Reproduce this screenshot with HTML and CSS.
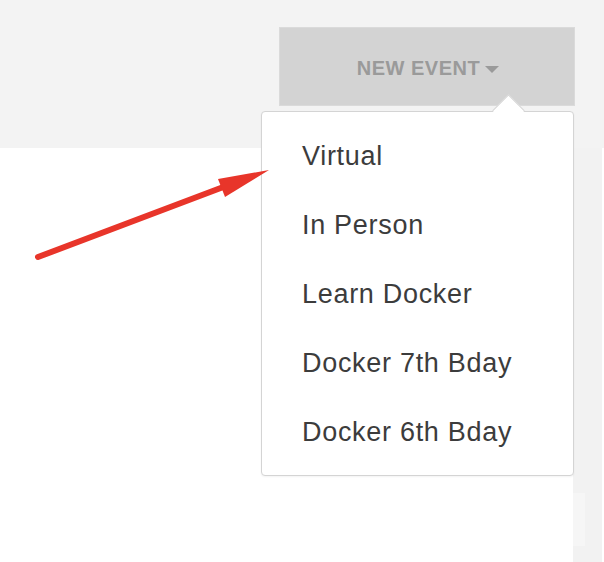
FILE: index.html
```html
<!DOCTYPE html>
<html>
<head>
<meta charset="utf-8">
<link rel="stylesheet" href="styles.css">
</head>
<body>
<div class="page">
  <header class="header">
    <button class="new-event">NEW EVENT <span class="caret"></span></button>
  </header>
  <div class="body-row">
    <main class="main"></main>
    <aside class="side"></aside>
  </div>
  <div class="ghost"></div>
  <div class="menu">
    <ul class="menu-list">
      <li>Virtual</li>
      <li>In Person</li>
      <li>Learn Docker</li>
      <li>Docker 7th Bday</li>
      <li>Docker 6th Bday</li>
    </ul>
  </div>
  <svg class="arrow" width="604" height="562" viewBox="0 0 604 562">
    <line x1="38" y1="257" x2="226" y2="186" stroke="#e8352a" stroke-width="6" stroke-linecap="round"/>
    <polygon points="269,170 218,179 225,197" fill="#e8352a"/>
  </svg>
</div>
</body>
</html>
```
FILE: styles.css
```css
* { box-sizing: border-box; }
html, body { margin: 0; padding: 0; }
body {
  width: 604px;
  height: 562px;
  background: #ffffff;
  font-family: "Liberation Sans", Arial, sans-serif;
  overflow: hidden;
}
.page {
  position: relative;
  width: 604px;
  height: 562px;
  display: flex;
  flex-direction: column;
}
.header {
  height: 148px;
  background: #f3f3f3;
  padding: 27px 0 0 279px;
  flex: none;
}
.new-event {
  width: 296px;
  height: 79px;
  background: #d3d3d3;
  border: 1px solid #dadada;
  color: #9a9a9a;
  font-family: "Liberation Sans", Arial, sans-serif;
  font-weight: bold;
  font-size: 20px;
  letter-spacing: 0.5px;
  display: flex;
  align-items: center;
  justify-content: center;
  gap: 5px;
  padding: 4px 0 0 2px;
  cursor: pointer;
}
.caret {
  width: 0;
  height: 0;
  border-left: 7.5px solid transparent;
  border-right: 7.5px solid transparent;
  border-top: 7px solid #9a9a9a;
  margin-top: 1px;
}
.body-row {
  flex: 1;
  display: flex;
}
.main {
  flex: 1;
  background: #ffffff;
}
.ghost {
  position: absolute;
  left: 522px;
  top: 493px;
  width: 63px;
  height: 53px;
  background: rgba(255,255,255,0.3);
}
.side {
  width: 29px;
  margin-right: 2px;
  background: #f2f2f2;
}
.menu {
  position: absolute;
  left: 261px;
  top: 111px;
  width: 313px;
  height: 365px;
  background: #ffffff;
  border: 1px solid #d4d4d4;
  border-radius: 4px;
  box-shadow: 0 1px 2px rgba(0,0,0,0.05);
}
.menu::before {
  content: "";
  position: absolute;
  left: 235px;
  top: -13px;
  width: 22px;
  height: 22px;
  background: #ffffff;
  border-left: 1px solid #d4d4d4;
  border-top: 1px solid #d4d4d4;
  transform: rotate(45deg);
}
.menu-list {
  position: relative;
  list-style: none;
  margin: 0;
  padding: 18px 0 0 40px;
}
.menu-list li {
  height: 69px;
  line-height: 52px;
  font-size: 27px;
  color: #3c3c3c;
  letter-spacing: 0.7px;
}
.arrow {
  position: absolute;
  left: 0;
  top: 0;
  pointer-events: none;
}
```
